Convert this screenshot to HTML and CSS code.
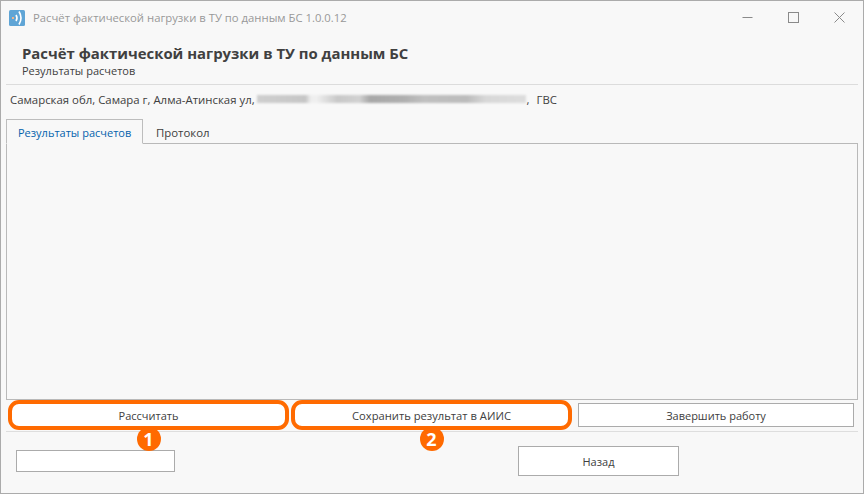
FILE: index.html
```html
<!DOCTYPE html>
<html lang="ru">
<head>
<meta charset="utf-8">
<title>Расчёт фактической нагрузки</title>
<link rel="stylesheet" href="styles.css">
</head>
<body>
<div class="window">
  <header class="titlebar">
    <svg class="app-icon" width="16" height="16" viewBox="0 0 16 16">
      <rect width="16" height="16" rx="1.5" fill="#5fa5d6"/>
      <rect x="3" y="7" width="2" height="2" fill="#f0b48a"/>
      <path d="M7 5Q9 8 7 11M10 1.5Q14 8 10 14.5" fill="none" stroke="#fff" stroke-width="1.6"/>
    </svg>
    <span class="title-text">Расчёт фактической нагрузки в ТУ по данным БС 1.0.0.12</span>
    <div class="controls">
      <svg width="11" height="11" viewBox="0 0 11 11"><path d="M0.5 5.5H10.5" stroke="#8a8a8a" fill="none"/></svg>
      <svg width="11" height="11" viewBox="0 0 11 11"><rect x="0.5" y="0.5" width="10" height="10" stroke="#8a8a8a" fill="none"/></svg>
      <svg width="11" height="11" viewBox="0 0 11 11"><path d="M0.5 0.5L10.5 10.5M10.5 0.5L0.5 10.5" stroke="#8a8a8a" fill="none"/></svg>
    </div>
  </header>
  <section class="heading">
    <h1>Расчёт фактической нагрузки в ТУ по данным БС</h1>
    <p>Результаты расчетов</p>
  </section>
  <div class="address">
    <span>Самарская обл, Самара г, Алма-Атинская ул,</span>
    <span class="redacted"></span>
    <span class="comma">,</span>
    <span class="kind">ГВС</span>
  </div>
  <nav class="tabs">
    <span class="tab active">Результаты расчетов</span>
    <span class="tab">Протокол</span>
  </nav>
  <main class="panel"></main>
  <div class="actions">
    <button class="btn marked">Рассчитать<span class="badge">1</span></button>
    <button class="btn marked">Сохранить результат в АИИС<span class="badge">2</span></button>
    <button class="btn plain">Завершить работу</button>
  </div>
  <footer class="footer">
    <div class="field"></div>
    <button class="btn back">Назад</button>
  </footer>
</div>
</body>
</html>
```
FILE: styles.css
```css
* { box-sizing: border-box; }
html, body { margin: 0; padding: 0; }
body { width: 864px; height: 494px; overflow: hidden; font-family: "Open Sans", "Noto Sans", sans-serif; color: #404040; }
.window { width: 864px; height: 494px; border: 1px solid #ababab; background: #f8f8f8; display: flex; flex-direction: column; padding: 0 5px; }
.titlebar { height: 33px; flex: none; display: flex; align-items: center; margin-left: 3px; }
.app-icon { flex: none; }
.title-text { margin-left: 8px; font-size: 11.3px; color: #999; white-space: nowrap; }
.controls { margin-left: auto; display: flex; gap: 35px; margin-right: 13px; }
.heading { height: 51px; flex: none; padding: 10px 0 0 16px; border-bottom: 1px solid #dcdcdc; }
.heading h1 { margin: 0; font-size: 14.9px; line-height: 18px; font-weight: 700; color: #404040; white-space: nowrap; }
.heading p { margin: 1px 0 0; font-size: 11px; line-height: 15px; color: #404040; }
.address { height: 30px; flex: none; display: flex; align-items: center; padding: 0 0 2px 4px; font-size: 11.4px; color: #404040; white-space: nowrap; }
.redacted { width: 269px; height: 8px; margin-left: 2px; background: linear-gradient(90deg, #cfcfcf, #c6c6c6 18%, #eeeeee 20%, #f0f0f0 22%, #c8c8c8 30%, #d2d2d2 38%, #a8a8a8 42%, #b0b0b0 55%, #c0c0c0 62%, #bcbcbc 78%, #d8d8d8 85%, #dddddd 100%); filter: blur(1px); }
.comma { margin-left: 1px; }
.kind { margin-left: 7px; }
.tabs { height: 25px; flex: none; display: flex; margin-top: 4px; position: relative; z-index: 1; }
.tab { height: 25px; padding-top: 1px; display: flex; align-items: center; font-size: 11px; color: #404040; white-space: nowrap; }
.tab.active { width: 137px; padding: 1px 11px 0; border: 1px solid #bdbdbd; border-bottom: 1px solid #f8f8f8; color: #0563ad; }
.tab + .tab { padding-left: 13px; font-size: 11.4px; }
.panel { flex: none; height: 257px; margin-top: -1px; border: 1px solid #b9b9b9; }
.actions { height: 32px; flex: none; display: flex; align-items: center; gap: 2px; padding: 0 3px 1px 2px; border-bottom: 1px solid #dedede; }
.btn { font: inherit; font-size: 11px; color: #404040; background: #fff; border: 1px solid #ababab; padding: 0; }
.marked { position: relative; width: 281px; height: 30px; border: 4px solid #ff6a00; border-radius: 11px; }
.marked + .marked { font-size: 11.2px; }
.plain { width: 276px; height: 24px; margin-left: 4px; }
.badge { position: absolute; top: 23px; left: 50%; margin-left: -12px; width: 24px; height: 24px; border-radius: 50%; background: #ff6a00; color: #fff; font-size: 18px; font-weight: 700; line-height: 24px; text-align: center; }
.footer { flex: 1; display: flex; align-items: flex-start; padding-left: 10px; }
.field { width: 159px; height: 22px; margin-top: 18px; background: #fff; border: 1px solid #ababab; }
.back { width: 161px; height: 30px; margin-top: 14px; margin-left: 343px; }
```
